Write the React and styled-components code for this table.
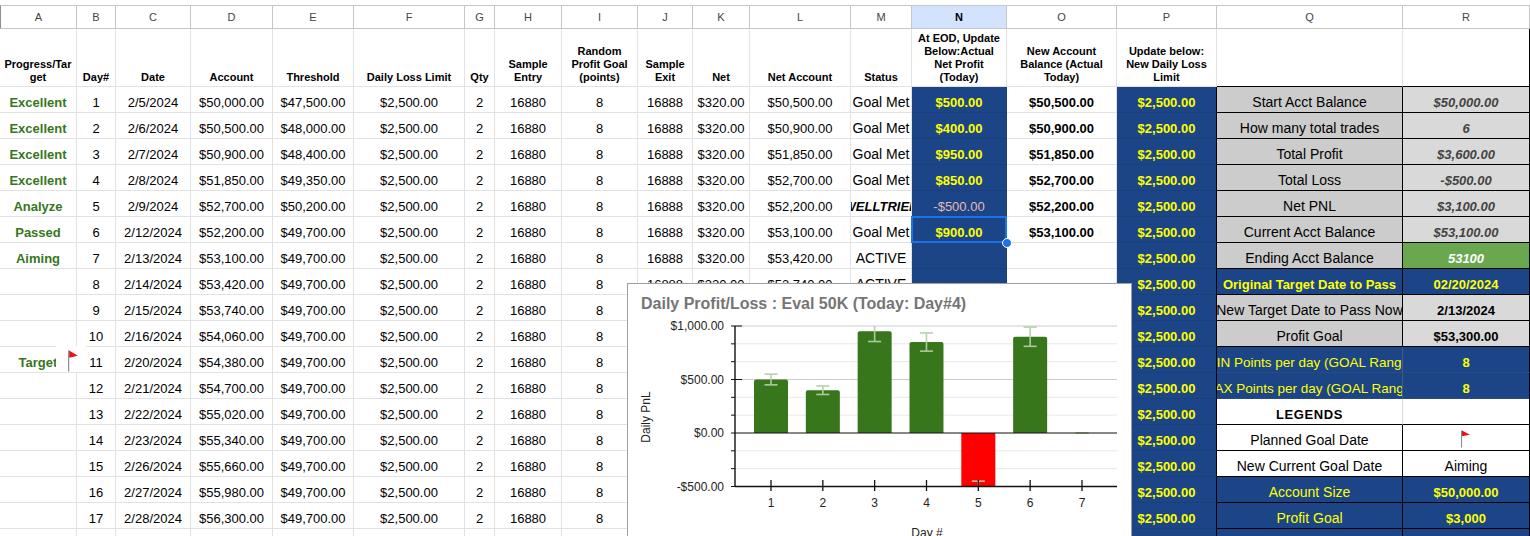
import React from 'react';
import styled, { createGlobalStyle } from 'styled-components';

const GlobalStyle = createGlobalStyle`
  html, body {
    margin: 0;
    padding: 0;
    background: #ffffff;
    overflow: hidden;
  }
  body {
    font-family: "Liberation Sans", Arial, sans-serif;
  }
`;

const COL_WIDTHS = [77, 39, 75, 82, 81, 111, 30, 67, 76, 55, 57, 101, 61, 95, 110, 100, 186, 127];
const LETTERS = 'ABCDEFGHIJKLMNOPQR'.split('');

const GRID_LINE = '#e2e2e3';
const HEAD_LINE = '#c4c7c5';
const BLUE = '#1c4587';
const BLUE_LINE = '#1a3f7a';
const YELLOW = '#ffff00';
const GREEN = '#38761d';

const HEADERS = [
  ['Progress/Tar', 'get'], ['Day#'], ['Date'], ['Account'], ['Threshold'], ['Daily Loss Limit'], ['Qty'],
  ['Sample', 'Entry'], ['Random', 'Profit Goal', '(points)'], ['Sample', 'Exit'], ['Net'], ['Net Account'],
  ['Status'], ['At EOD, Update', 'Below:Actual', 'Net Profit', '(Today)'], ['New Account', 'Balance (Actual', 'Today)'],
  ['Update below:', 'New Daily Loss', 'Limit'], [], [],
];

const DATES = [
  '2/5/2024', '2/6/2024', '2/7/2024', '2/8/2024', '2/9/2024', '2/12/2024', '2/13/2024', '2/14/2024', '2/15/2024',
  '2/16/2024', '2/20/2024', '2/21/2024', '2/22/2024', '2/23/2024', '2/26/2024', '2/27/2024', '2/28/2024', '2/29/2024',
];
const PROGRESS = ['Excellent', 'Excellent', 'Excellent', 'Excellent', 'Analyze', 'Passed', 'Aiming', '', '', '', 'Target'];
const THRESHOLD = [47500, 48000, 48400, 49350, 50200];
const ACTUAL = [500, 400, 950, 850, -500, 900];
const STATUS = ['Goal Met', 'Goal Met', 'Goal Met', 'Goal Met', 'WELLTRIED', 'Goal Met'];

const money = (n, digits = 2) =>
  (n < 0 ? '-' : '') + '$' + Math.abs(n).toLocaleString('en-US', { minimumFractionDigits: digits, maximumFractionDigits: digits });

let balance = 50000;
const ROWS = DATES.map((date, i) => {
  const account = balance;
  const actual = ACTUAL[i];
  const net = actual !== undefined ? account + actual : account + 320;
  balance = net;
  return {
    progress: PROGRESS[i] || '',
    day: i + 1,
    date,
    account,
    threshold: THRESHOLD[i] !== undefined ? THRESHOLD[i] : 49700,
    net,
    status: STATUS[i] || 'ACTIVE',
    actual,
  };
});

const SIDE = [
  { q: 'Start Acct Balance', r: '$50,000.00', kind: 'stat' },
  { q: 'How many total trades', r: '6', kind: 'stat' },
  { q: 'Total Profit', r: '$3,600.00', kind: 'stat' },
  { q: 'Total Loss', r: '-$500.00', kind: 'stat' },
  { q: 'Net PNL', r: '$3,100.00', kind: 'stat' },
  { q: 'Current Acct Balance', r: '$53,100.00', kind: 'stat' },
  { q: 'Ending Acct Balance', r: '53100', kind: 'ending' },
  { q: 'Original Target Date to Pass', r: '02/20/2024', kind: 'target' },
  { q: 'New Target Date to Pass Now', r: '2/13/2024', kind: 'plain' },
  { q: 'Profit Goal', r: '$53,300.00', kind: 'plain' },
  { q: 'MIN Points per day (GOAL Range)', r: '8', kind: 'range' },
  { q: 'MAX Points per day (GOAL Range)', r: '8', kind: 'range' },
  { q: 'LEGENDS', r: '', kind: 'legend' },
  { q: 'Planned Goal Date', r: 'flag', kind: 'item' },
  { q: 'New Current Goal Date', r: 'Aiming', kind: 'item' },
  { q: 'Account Size', r: '$50,000.00', kind: 'blue' },
  { q: 'Profit Goal', r: '$3,000', kind: 'blue' },
  { q: '', r: '', kind: 'blue' },
];

const SIDE_STYLE = {
  stat: { q: { $bg: '#cccccc', $size: 14 }, r: { $bg: '#d9d9d9', $bold: true, $italic: true, $color: '#434343' }, line: '#000', mid: '#000' },
  ending: { q: { $bg: '#cccccc', $size: 14 }, r: { $bg: '#6aa84f', $bold: true, $italic: true, $color: '#fff' }, line: '#000', mid: '#000' },
  target: { q: { $bg: BLUE, $color: YELLOW, $bold: true }, r: { $bg: BLUE, $color: YELLOW, $bold: true }, line: '#000', mid: '#000' },
  plain: { q: { $bg: '#cccccc', $size: 14 }, r: { $bg: '#d9d9d9', $bold: true }, line: '#000', mid: '#000' },
  range: { q: { $bg: BLUE, $color: YELLOW, $size: 13.5 }, r: { $bg: BLUE, $color: YELLOW, $bold: true }, line: '#2a4a80', mid: '#4b5a75' },
  legend: { q: { $bold: true, $spaced: true }, r: {}, line: '#000', mid: '#dadada' },
  item: { q: { $size: 14 }, r: { $size: 14 }, line: '#000', mid: '#000' },
  blue: { q: { $bg: BLUE, $color: YELLOW, $size: 14 }, r: { $bg: BLUE, $color: YELLOW, $bold: true }, line: '#000', mid: '#000' },
};

const Page = styled.div`
  position: relative;
  width: 1530px;
  height: 536px;
  overflow: hidden;
`;

const Sheet = styled.div`
  display: grid;
  grid-template-columns: ${COL_WIDTHS.map((w) => `${w}px`).join(' ')};
  grid-template-rows: 24px 58px;
  grid-auto-rows: 26px;
  padding-top: 5px;
`;

const ColHead = styled.div`
  box-sizing: border-box;
  display: flex;
  align-items: center;
  justify-content: center;
  font-size: 11px;
  color: ${(p) => (p.$active ? '#000' : '#444')};
  font-weight: ${(p) => (p.$active ? 700 : 400)};
  background: ${(p) => (p.$active ? '#d3e3fd' : '#fff')};
  border-top: 1px solid ${HEAD_LINE};
  border-bottom: 1px solid ${HEAD_LINE};
  border-right: 1px solid ${HEAD_LINE};
  border-left: ${(p) => (p.$first ? '1px solid #8f8f8f' : 'none')};
`;

const TitleCell = styled.div`
  box-sizing: border-box;
  display: flex;
  align-items: flex-end;
  justify-content: center;
  padding: 0 2px 2px;
  overflow: hidden;
  font-size: 11px;
  line-height: 13px;
  font-weight: 700;
  text-align: center;
  color: #000;
  background: #fff;
  border-right: 1px solid ${(p) => p.$rline || GRID_LINE};
  border-bottom: 1px solid ${(p) => p.$line || GRID_LINE};
`;

const Cell = styled.div`
  box-sizing: border-box;
  position: relative;
  display: flex;
  align-items: flex-end;
  justify-content: center;
  padding: 0 3px ${(p) => (p.$size && p.$size >= 14 ? 2 : 1)}px;
  overflow: ${(p) => (p.$open ? 'visible' : 'hidden')};
  white-space: nowrap;
  font-size: ${(p) => p.$size || 13}px;
  line-height: 16px;
  font-weight: ${(p) => (p.$bold ? 700 : 400)};
  font-style: ${(p) => (p.$italic ? 'italic' : 'normal')};
  letter-spacing: ${(p) => (p.$spaced ? '0.6px' : 'normal')};
  color: ${(p) => p.$color || '#000'};
  background: ${(p) => p.$bg || '#fff'};
  border-right: 1px solid ${(p) => p.$rline || p.$line || GRID_LINE};
  border-bottom: 1px solid ${(p) => p.$line || GRID_LINE};
`;

const Selection = styled.div`
  position: absolute;
  top: -1px;
  left: -1px;
  right: -1px;
  bottom: -1px;
  border: 2px solid #1a73e8;
  z-index: 2;
  pointer-events: none;
`;

const Handle = styled.span`
  position: absolute;
  right: -7px;
  bottom: -7px;
  width: 8px;
  height: 8px;
  border-radius: 50%;
  background: #1a73e8;
  border: 1.5px solid #fff;
`;

const FlagPatch = styled.div`
  position: absolute;
  left: 56px;
  top: -1px;
  width: 30px;
  height: 26px;
  background: #fff;
  z-index: 2;
  padding: 4px 0 0 11px;
  box-sizing: border-box;
`;

const FlagSvg = styled.svg`
  display: block;
`;

const Flag = ({ w = 12, h = 20 }) => (
  <FlagSvg width={w} height={h} viewBox="0 0 12 20" preserveAspectRatio="none">
    <line x1="1.5" y1="0.5" x2="1.5" y2="19.5" stroke="#8c8c8c" strokeWidth="1.1" />
    <polygon points="2,0.5 10,5.2 2,7" fill="#e3131b" />
  </FlagSvg>
);

/* ---------- chart ---------- */

const ChartBox = styled.div`
  position: absolute;
  left: 627px;
  top: 283px;
  width: 505px;
  height: 262px;
  box-sizing: border-box;
  background: #fff;
  border: 1px solid #9e9e9e;
  z-index: 5;
`;

const VALUES = [500, 400, 950, 850, -500, 900, 0];
const Y0 = 149;
const K = 0.107;
const ys = (v) => Y0 - v * K;
const xs = (i) => 143 + i * 51.83;
const AX_L = 107;
const AX_R = 489;
const TOP = ys(1000);
const BOTTOM = ys(-500);
const MAJOR = [1000, 500];
const MINOR = [833.33, 666.67, 333.33, 166.67, -166.67, -333.33];
const FONT = '"Liberation Sans", Arial, sans-serif';

const barPath = (x, y, w, base) => {
  const r = 2;
  if (y >= base) return `M${x} ${base} H${x + w} V${y} H${x} Z`;
  return `M${x} ${base} V${y + r} Q${x} ${y} ${x + r} ${y} H${x + w - r} Q${x + w} ${y} ${x + w} ${y + r} V${base} Z`;
};

function Chart() {
  return (
    <ChartBox>
      <svg width="503" height="260" viewBox="0 0 503 260" fontFamily={FONT}>
        <defs>
          <clipPath id="plot">
            <rect x={AX_L} y={TOP} width={AX_R - AX_L} height={BOTTOM - TOP} />
          </clipPath>
        </defs>
        <text x="13" y="25" fontSize="16" fontWeight="700" fill="#757575">
          Daily Profit/Loss : Eval 50K (Today: Day#4)
        </text>

        {MINOR.map((v) => (
          <line key={v} x1={AX_L} x2={AX_R} y1={ys(v)} y2={ys(v)} stroke="#e8e8e8" strokeWidth="1" />
        ))}
        {MAJOR.map((v) => (
          <line key={v} x1={AX_L} x2={AX_R} y1={ys(v)} y2={ys(v)} stroke="#cccccc" strokeWidth="1" />
        ))}

        {VALUES.map((v, i) => {
          const x = xs(i) - 17;
          if (v > 0) return <path key={i} d={barPath(x, ys(v), 34, Y0)} fill="#38761d" />;
          if (v < 0) return <rect key={i} x={x} y={Y0} width="34" height={ys(v) - Y0} fill="#ff0000" />;
          return null;
        })}

        <g clipPath="url(#plot)" stroke="#b3cfa8" strokeWidth="1.6" opacity="0.95">
          {VALUES.map((v, i) => {
            const c = xs(i);
            const a = ys(v * 1.1);
            const b = ys(v * 0.9);
            return (
              <g key={i}>
                <line x1={c} x2={c} y1={a} y2={b} />
                <line x1={c - 6.5} x2={c + 6.5} y1={a} y2={a} />
                <line x1={c - 6.5} x2={c + 6.5} y1={b} y2={b} />
              </g>
            );
          })}
        </g>

        <line x1={AX_L} x2={AX_R} y1={Y0} y2={Y0} stroke="#111" strokeWidth="1.2" />
        <line x1={AX_L} x2={AX_R} y1={BOTTOM} y2={BOTTOM} stroke="#111" strokeWidth="1.4" />
        <line x1={AX_L} x2={AX_L} y1={TOP} y2={BOTTOM} stroke="#111" strokeWidth="1.4" />
        {[...MAJOR, 0, -500, ...MINOR].map((v) => (
          <line key={`t${v}`} x1={AX_L - 4} x2={AX_L} y1={ys(v)} y2={ys(v)} stroke="#111" strokeWidth="1" />
        ))}
        {MAJOR.map((v) => (
          <line key={`m${v}`} x1={AX_L} x2={AX_L + 7} y1={ys(v)} y2={ys(v)} stroke="#111" strokeWidth="1" />
        ))}

        {[1000, 500, 0, -500].map((v) => (
          <text key={`l${v}`} x="96" y={ys(v) + 4} fontSize="12" fill="#222" textAnchor="end">
            {money(v)}
          </text>
        ))}

        {VALUES.map((v, i) => (
          <g key={`x${i}`}>
            <line x1={xs(i)} x2={xs(i)} y1={BOTTOM - 6.5} y2={BOTTOM + 4.5} stroke="#111" strokeWidth="1.3" />
            <text x={xs(i)} y="223" fontSize="12" fill="#222" textAnchor="middle">
              {i + 1}
            </text>
          </g>
        ))}

        <text x="299" y="253" fontSize="12" fill="#222" textAnchor="middle">
          Day #
        </text>
        <text transform="translate(22 133) rotate(-90)" fontSize="12" fill="#222" textAnchor="middle">
          Daily PnL
        </text>
      </svg>
    </ChartBox>
  );
}

/* ---------- sheet ---------- */

function DataRow({ row, index }) {
  const side = SIDE[index];
  const st = SIDE_STYLE[side.kind];
  const has = row.actual !== undefined;
  const neg = has && row.actual < 0;
  const welltried = row.status === 'WELLTRIED';

  return (
    <>
      <Cell $bold $color={GREEN} $open={index === 10}>
        {row.progress}
        {index === 10 && (
          <FlagPatch>
            <Flag w={13} h={22} />
          </FlagPatch>
        )}
      </Cell>
      <Cell>{row.day}</Cell>
      <Cell>{row.date}</Cell>
      <Cell>{money(row.account)}</Cell>
      <Cell>{money(row.threshold)}</Cell>
      <Cell>$2,500.00</Cell>
      <Cell>2</Cell>
      <Cell>16880</Cell>
      <Cell>8</Cell>
      <Cell>16888</Cell>
      <Cell>$320.00</Cell>
      <Cell>{money(row.net)}</Cell>
      <Cell $size={welltried ? 13 : 14} $bold={welltried} $italic={welltried}>
        {row.status}
      </Cell>
      <Cell $bg={BLUE} $line={BLUE_LINE} $color={neg ? '#e6b8af' : YELLOW} $bold={!neg} $open={index === 5}>
        {has ? money(row.actual) : ''}
        {index === 5 && (
          <Selection>
            <Handle />
          </Selection>
        )}
      </Cell>
      <Cell $bold>{has ? money(row.net) : ''}</Cell>
      <Cell $bg={BLUE} $line={BLUE_LINE} $rline="#000" $color={YELLOW} $bold>
        $2,500.00
      </Cell>
      <Cell {...st.q} $line={st.line} $rline={st.mid}>
        {side.q}
      </Cell>
      <Cell {...st.r} $line={st.line} $rline="#000">
        {side.r === 'flag' ? <Flag w={12} h={18} /> : side.r}
      </Cell>
    </>
  );
}

export default function App() {
  return (
    <Page>
      <GlobalStyle />
      <Sheet>
        {LETTERS.map((l, i) => (
          <ColHead key={l} $first={i === 0} $active={l === 'N'}>
            {l}
          </ColHead>
        ))}
        {HEADERS.map((lines, i) => (
          <TitleCell key={`h${i}`} $line={i >= 16 ? '#000' : undefined} $rline={i === 17 ? '#000' : undefined}>
            <span>
              {lines.map((t, j) => (
                <React.Fragment key={j}>
                  {j > 0 && <br />}
                  {t}
                </React.Fragment>
              ))}
            </span>
          </TitleCell>
        ))}
        {ROWS.map((row, i) => (
          <DataRow key={row.day} row={row} index={i} />
        ))}
      </Sheet>
      <Chart />
    </Page>
  );
}
